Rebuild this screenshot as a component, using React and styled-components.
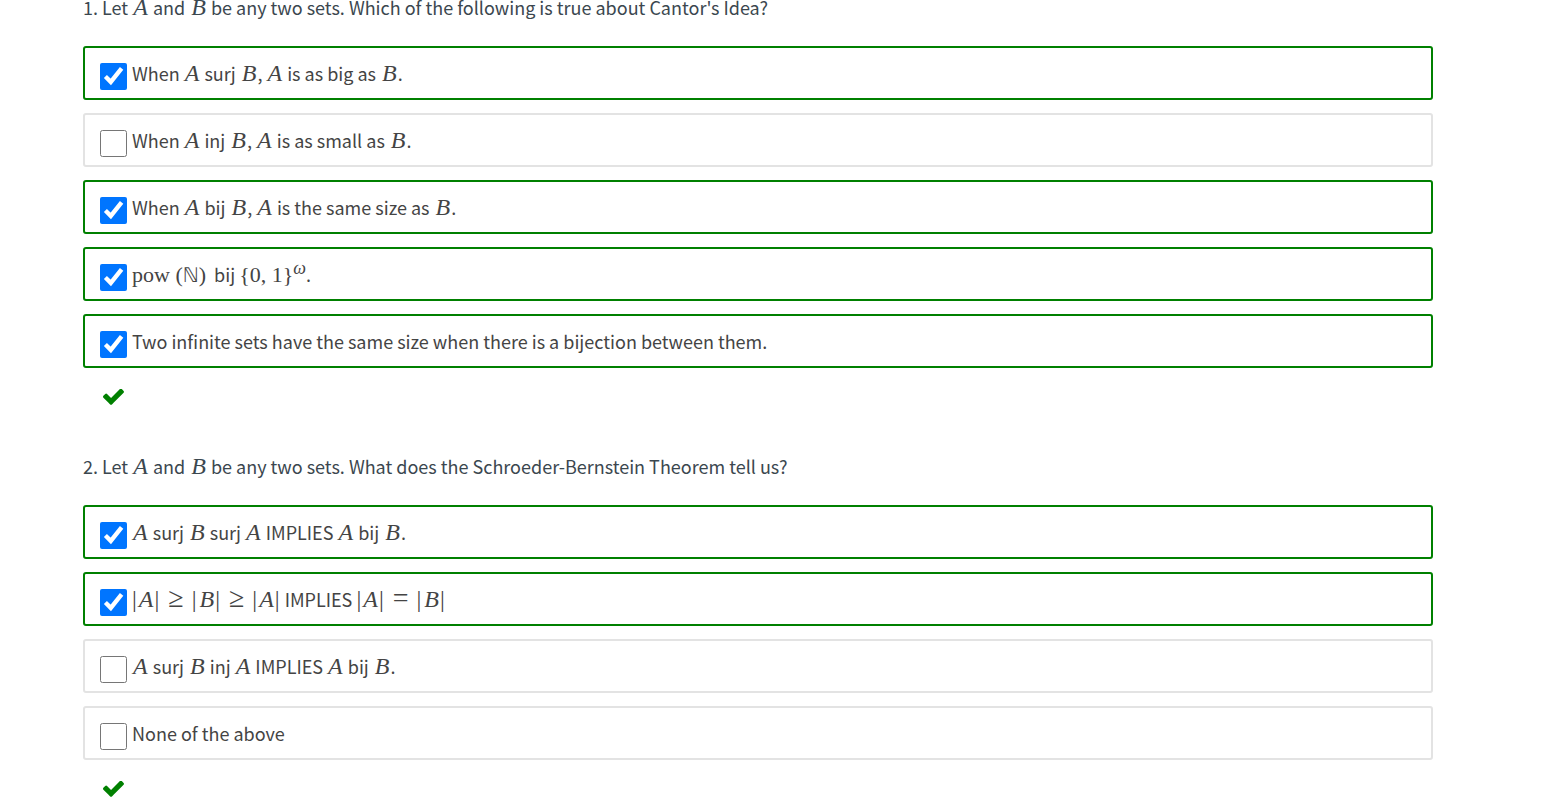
import React from "react";
import styled, { createGlobalStyle, css } from "styled-components";

const GlobalStyle = createGlobalStyle`
  *, *::before, *::after { box-sizing: border-box; }
  body {
    margin: 0;
    background: #fff;
    color: #444;
    font-family: "Noto Sans CJK JP", "Noto Sans", sans-serif;
    font-size: 18px;
  }
`;

const Page = styled.main`
  padding: 0 120px 0 83px;
`;

const Question = styled.fieldset`
  margin: 0;
  padding: 0;
  border: 0;
  min-width: 0;
`;

const Prompt = styled.legend`
  padding: 0;
  margin-bottom: 32px;
  line-height: 14px;
  color: #3b474f;
`;

const Answers = styled.div`
  display: flex;
  flex-direction: column;
  gap: 13px;
`;

const Answer = styled.label`
  display: flex;
  align-items: flex-start;
  gap: 5px;
  height: 54px;
  padding: 15px;
  border: 2px solid ${(p) => (p.$correct ? "#008000" : "#e3e3e3")};
  border-radius: 3px;
`;

const Tick = styled.input`
  width: 27px;
  height: 27px;
  margin: 0;
  flex: none;
`;

const AnswerText = styled.span`
  line-height: 20px;
  white-space: nowrap;
`;

const mathFont = css`
  font-family: "Liberation Serif", serif;
  font-size: 24px;
  line-height: 14px;
`;

const Variable = styled.i`
  ${mathFont}
  padding: 0 1px 0 ${(p) => (p.$wide ? 2 : 1)}px;
`;

const Upright = styled.span`
  ${mathFont}
  font-size: 22px;
`;

const Group = styled.span`
  padding-right: 4px;
`;

const Blackboard = styled.span`
  font-family: "DejaVu Sans", sans-serif;
  font-size: 20px;
  line-height: 14px;
`;

const Bar = styled.span`
  ${mathFont}
  padding: 0 1px 0 0;
`;

const Relation = styled.span`
  ${mathFont}
  font-size: 28px;
  padding: 0 8px;
`;

const Exponent = styled.sup`
  font-family: "Liberation Serif", serif;
  font-style: italic;
  font-size: 18px;
  line-height: 0;
  vertical-align: 8px;
`;

const Feedback = styled.div`
  display: flex;
  align-items: flex-start;
  height: 91px;
  padding: 21px 20px 0;
`;

const A = () => <Variable>A</Variable>;
const B = () => <Variable $wide>B</Variable>;
const Size = ({ children }) => (
  <>
    <Bar>|</Bar>
    {children}
    <Bar>|</Bar>
  </>
);

function CheckMark() {
  return (
    <svg width="21" height="16" viewBox="121 374 1550 1148" role="img" aria-label="Correct">
      <path
        d="M1671 566q0 40-28 68l-724 724-136 136q-28 28-68 28t-68-28l-136-136-362-362q-28-28-28-68t28-68l136-136q28-28 68-28t68 28l294 295 656-657q28-28 68-28t68 28l136 136q28 28 28 68z"
        fill="#008000"
      />
    </svg>
  );
}

const questions = [
  {
    prompt: <>1. Let <A /> and <B /> be any two sets. Which of the following is true about Cantor's Idea?</>,
    answers: [
      { checked: true, text: <>When <A /> surj <B />, <A /> is as big as <B />.</> },
      { checked: false, text: <>When <A /> inj <B />, <A /> is as small as <B />.</> },
      { checked: true, text: <>When <A /> bij <B />, <A /> is the same size as <B />.</> },
      {
        checked: true,
        text: (
          <>
            <Group>
              <Upright>pow (</Upright><Blackboard>ℕ</Blackboard><Upright>)</Upright>
            </Group>{" "}
            bij <Upright>{"{0, 1}"}</Upright><Exponent>ω</Exponent>.
          </>
        ),
      },
      { checked: true, text: <>Two infinite sets have the same size when there is a bijection between them.</> },
    ],
  },
  {
    prompt: <>2. Let <A /> and <B /> be any two sets. What does the Schroeder-Bernstein Theorem tell us?</>,
    answers: [
      { checked: true, text: <><A /> surj <B /> surj <A /> IMPLIES <A /> bij <B />.</> },
      {
        checked: true,
        text: (
          <>
            <Size><A /></Size><Relation>≥</Relation><Size><B /></Size><Relation>≥</Relation><Size><A /></Size>{" "}
            IMPLIES <Size><A /></Size><Relation>=</Relation><Size><B /></Size>
          </>
        ),
      },
      { checked: false, text: <><A /> surj <B /> inj <A /> IMPLIES <A /> bij <B />.</> },
      { checked: false, text: <>None of the above</> },
    ],
  },
];

export default function App() {
  return (
    <>
      <GlobalStyle />
      <Page>
        {questions.map((question, q) => (
          <Question key={q}>
            <Prompt>{question.prompt}</Prompt>
            <Answers>
              {question.answers.map((answer, a) => (
                <Answer key={a} $correct={answer.checked}>
                  <Tick type="checkbox" name={`question-${q + 1}`} defaultChecked={answer.checked} />
                  <AnswerText>{answer.text}</AnswerText>
                </Answer>
              ))}
            </Answers>
            <Feedback>
              <CheckMark />
            </Feedback>
          </Question>
        ))}
      </Page>
    </>
  );
}
